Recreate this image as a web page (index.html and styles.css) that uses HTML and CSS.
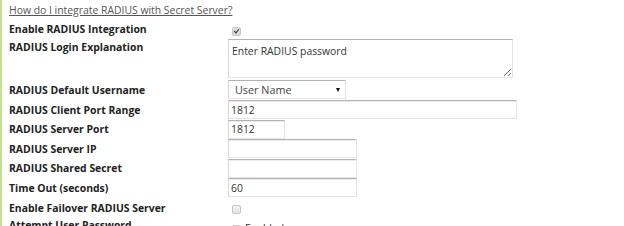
FILE: index.html
```html
<!DOCTYPE html>
<html lang="en">
<head>
  <meta charset="UTF-8">
  <title>RADIUS Settings</title>
  <link rel="stylesheet" href="styles.css">
</head>
<body>
  <div class="panel">
    <div class="row row-link">
      <a href="#" class="help-link">How do I integrate RADIUS with Secret Server?</a>
    </div>

    <div class="row row-check">
      <label class="field-label" for="enableRadius">Enable RADIUS Integration</label>
      <div class="field"><input type="checkbox" id="enableRadius" class="chk" checked></div>
    </div>

    <div class="row row-top">
      <label class="field-label" for="loginExplanation">RADIUS Login Explanation</label>
      <div class="field"><textarea id="loginExplanation" class="txt-area">Enter RADIUS password</textarea></div>
    </div>

    <div class="row row-select">
      <label class="field-label" for="defaultUsername">RADIUS Default Username</label>
      <div class="field">
        <div class="select-box" id="defaultUsername">
          <span>User Name</span>
          <span class="arrow"></span>
        </div>
      </div>
    </div>

    <div class="row">
      <label class="field-label" for="clientPort">RADIUS Client Port Range</label>
      <div class="field"><input type="text" id="clientPort" class="txt w-wide" value="1812"></div>
    </div>

    <div class="row">
      <label class="field-label" for="serverPort">RADIUS Server Port</label>
      <div class="field"><input type="text" id="serverPort" class="txt w-small" value="1812"></div>
    </div>

    <div class="row">
      <label class="field-label" for="serverIp">RADIUS Server IP</label>
      <div class="field"><input type="text" id="serverIp" class="txt w-mid" value=""></div>
    </div>

    <div class="row">
      <label class="field-label" for="sharedSecret">RADIUS Shared Secret</label>
      <div class="field"><input type="text" id="sharedSecret" class="txt w-mid" value=""></div>
    </div>

    <div class="row">
      <label class="field-label" for="timeOut">Time Out (seconds)</label>
      <div class="field"><input type="text" id="timeOut" class="txt w-mid" value="60"></div>
    </div>

    <div class="row row-check2">
      <label class="field-label" for="failover">Enable Failover RADIUS Server</label>
      <div class="field"><input type="checkbox" id="failover" class="chk"></div>
    </div>

    <div class="row row-check2 row-last">
      <label class="field-label" for="attemptPwd">Attempt User Password</label>
      <div class="field"><input type="checkbox" id="attemptPwd" class="chk"><span class="chk-text">Enabled</span></div>
    </div>
  </div>
</body>
</html>
```

FILE: styles.css
```css
html, body {
  margin: 0;
  padding: 0;
  background: #fff;
  font-family: "Open Sans", "Noto Sans", sans-serif;
  font-size: 10.4px;
  color: #222;
}
.panel {
  border-left: 2px solid #c6e08e;
  padding-left: 7px;
  height: 226px;
  overflow: hidden;
}
.row {
  display: flex;
  align-items: center;
  height: 19.5px;
}
.row-link {
  height: 19px;
  padding-top: 1px;
  box-sizing: border-box;
}
.row-check {
  height: 19px;
}
.row-top {
  align-items: flex-start;
  height: 41px;
}
.row-select {
  height: 21px;
}
.row-check2 {
  align-items: flex-start;
  height: 17px;
}
.field-label {
  width: 219px;
  flex: none;
  font-weight: bold;
  line-height: 20px;
}
.row-top .field-label {
  line-height: 16px;
  padding-top: 1px;
}
.field {
  display: flex;
  align-items: center;
}
.row-check2 .field {
  align-items: flex-start;
}
.help-link {
  color: #555;
  text-decoration: underline;
  line-height: 18px;
}
.txt, .txt-area, .select-box {
  box-sizing: border-box;
  font-family: "Open Sans", "Noto Sans", sans-serif;
  font-size: 10.4px;
  color: #333;
  background: #fff;
  border: 1px solid #e4e4e4;
  border-top-color: #b2b2b2;
  border-left-color: #d6d6d6;
  border-radius: 0;
  margin: 0;
  outline: none;
}
.txt {
  height: 19px;
  padding: 0 2px;
  box-shadow: inset 0 1px 0 #ececec;
}
.w-wide { width: 289px; }
.w-small { width: 57px; }
.w-mid { width: 129px; }
.txt-area {
  width: 285px;
  height: 39px;
  margin-top: 1px;
  padding: 4px 3px 2px;
  line-height: 14px;
  resize: both;
}
.select-box {
  width: 118px;
  height: 19px;
  padding: 0 5px 0 6px;
  display: flex;
  align-items: center;
  justify-content: space-between;
  color: #444;
  font-size: 10.8px;
}
.arrow {
  width: 0;
  height: 0;
  border-left: 2.5px solid transparent;
  border-right: 2.5px solid transparent;
  border-top: 4px solid #111;
}
.chk {
  -webkit-appearance: none;
  appearance: none;
  width: 9px;
  height: 9px;
  margin: 0 0 0 4px;
  border: 1px solid #c4c4c4;
  border-radius: 2px;
  background: linear-gradient(#f4f4f4, #e2e2e2);
  box-sizing: border-box;
  position: relative;
  flex: none;
}
.chk:checked {
  background: #dcdcdc;
  border-color: #c8c8c8;
}
.chk:checked::after {
  content: "";
  position: absolute;
  left: 2px;
  top: 0px;
  width: 2px;
  height: 4px;
  border: solid #333;
  border-width: 0 1.5px 1.5px 0;
  transform: rotate(40deg);
}
.row-check .chk {
  margin-top: 5px;
}
.row-check2 .chk {
  margin-top: 7.5px;
}
.row-last .chk {
  margin-top: 10px;
}
.chk-text {
  margin-left: 4px;
  color: #333;
  line-height: 20px;
  margin-top: 3px;
}
```
